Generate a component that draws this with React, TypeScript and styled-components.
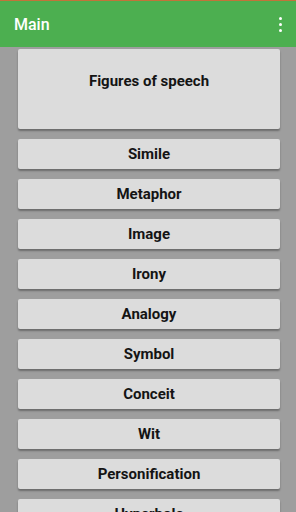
import React from "react";
import styled, { createGlobalStyle } from "styled-components";

const Global = createGlobalStyle`
  html, body {
    margin: 0;
    padding: 0;
    height: 512px;
    overflow: hidden;
    background: #9e9e9e;
    font-family: Roboto, "Liberation Sans", Arial, sans-serif;
  }
`;

const Page = styled.div`
  display: flex;
  flex-direction: column;
  width: 296px;
  height: 512px;
  background: #9e9e9e;
`;

const Toolbar = styled.div`
  height: 46px;
  border-top: 1px solid #c2733a;
  background: #4caf50;
  display: flex;
  align-items: center;
  justify-content: space-between;
  padding: 0 10px 0 14px;
  flex-shrink: 0;
`;

const Title = styled.div`
  color: #fff;
  font-size: 16px;
  font-weight: 500;
`;

const Menu = styled.div`
  display: flex;
  flex-direction: column;
  gap: 3px;
  padding: 0 4px;
`;

const Dot = styled.span`
  width: 3px;
  height: 3px;
  border-radius: 50%;
  background: #fff;
`;

const List = styled.div`
  display: flex;
  flex-direction: column;
  gap: 10px;
  padding: 2px 16px 0 18px;
`;

const Button = styled.div<{ $tall?: boolean }>`
  box-sizing: border-box;
  height: ${(p) => (p.$tall ? 80 : 30)}px;
  padding-top: ${(p) => (p.$tall ? 24 : 0)}px;
  flex-shrink: 0;
  background: #dcdcdc;
  border-radius: 2px;
  box-shadow: 0 2px 2px rgba(0, 0, 0, 0.32);
  display: flex;
  align-items: ${(p) => (p.$tall ? "flex-start" : "center")};
  justify-content: center;
  color: #141414;
  font-size: 15px;
  line-height: 17px;
  font-weight: 700;
`;

const items = [
  "Simile",
  "Metaphor",
  "Image",
  "Irony",
  "Analogy",
  "Symbol",
  "Conceit",
  "Wit",
  "Personification",
  "Hyperbole",
];

export default function App() {
  return (
    <Page>
      <Global />
      <Toolbar>
        <Title>Main</Title>
        <Menu>
          <Dot />
          <Dot />
          <Dot />
        </Menu>
      </Toolbar>
      <List>
        <Button $tall>Figures of speech</Button>
        {items.map((name) => (
          <Button key={name}>{name}</Button>
        ))}
      </List>
    </Page>
  );
}
